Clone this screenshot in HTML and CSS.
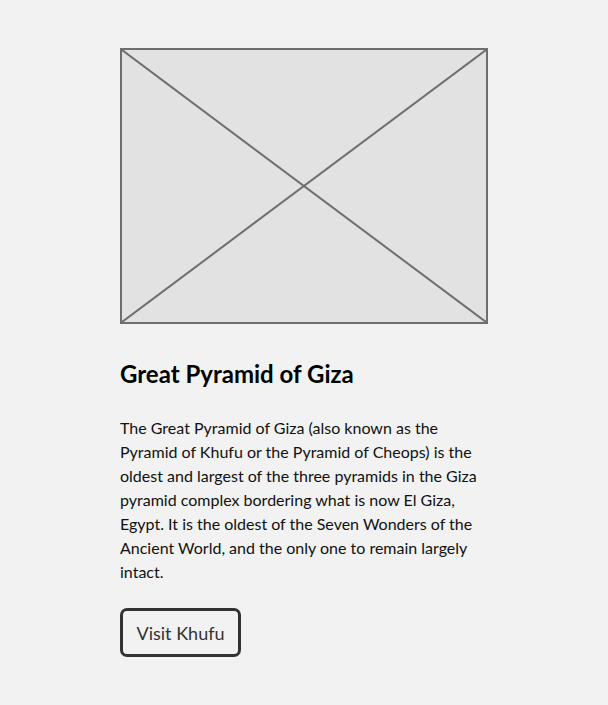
FILE: index.html
```html
<!DOCTYPE html>
<html lang="en">
<head>
<meta charset="utf-8">
<title>Great Pyramid of Giza</title>
<link rel="stylesheet" href="styles.css">
</head>
<body>
<main class="card">
  <div class="placeholder">
    <svg class="placeholder-svg" viewBox="0 0 364 272" preserveAspectRatio="none">
      <line x1="0" y1="0" x2="364" y2="272"></line>
      <line x1="364" y1="0" x2="0" y2="272"></line>
    </svg>
  </div>
  <h2 class="title">Great Pyramid of Giza</h2>
  <p class="text">The Great Pyramid of Giza (also known as the Pyramid of Khufu or the Pyramid of Cheops) is the oldest and largest of the three pyramids in the Giza pyramid complex bordering what is now El Giza, Egypt. It is the oldest of the Seven Wonders of the Ancient World, and the only one to remain largely intact.</p>
  <button class="btn" type="button">Visit Khufu</button>
</main>
</body>
</html>
```
FILE: styles.css
```css
html, body {
  margin: 0;
  padding: 0;
  background: #f2f2f2;
}
body {
  font-family: Lato, "Liberation Sans", sans-serif;
  color: #111;
}
.card {
  width: 368px;
  margin: 0 auto;
  padding-top: 48px;
}
.placeholder {
  box-sizing: border-box;
  width: 368px;
  height: 276px;
  border: 2px solid #6e6e6e;
  background: #e2e2e2;
}
.placeholder-svg {
  display: block;
  width: 100%;
  height: 100%;
}
.placeholder-svg line {
  stroke: #6e6e6e;
  stroke-width: 2;
  vector-effect: non-scaling-stroke;
}
.title {
  margin: 36px 0 0;
  font-size: 24px;
  font-weight: 700;
  line-height: 28px;
  color: #000;
}
.text {
  margin: 28px 0 0;
  font-size: 16px;
  line-height: 24px;
  color: #111;
}
.btn {
  display: block;
  margin-top: 24px;
  box-sizing: border-box;
  width: 121px;
  height: 49px;
  border: 3px solid #333;
  border-radius: 7px;
  background: transparent;
  font-family: Lato, "Liberation Sans", sans-serif;
  font-size: 18px;
  color: #333;
  padding: 0;
}
```
